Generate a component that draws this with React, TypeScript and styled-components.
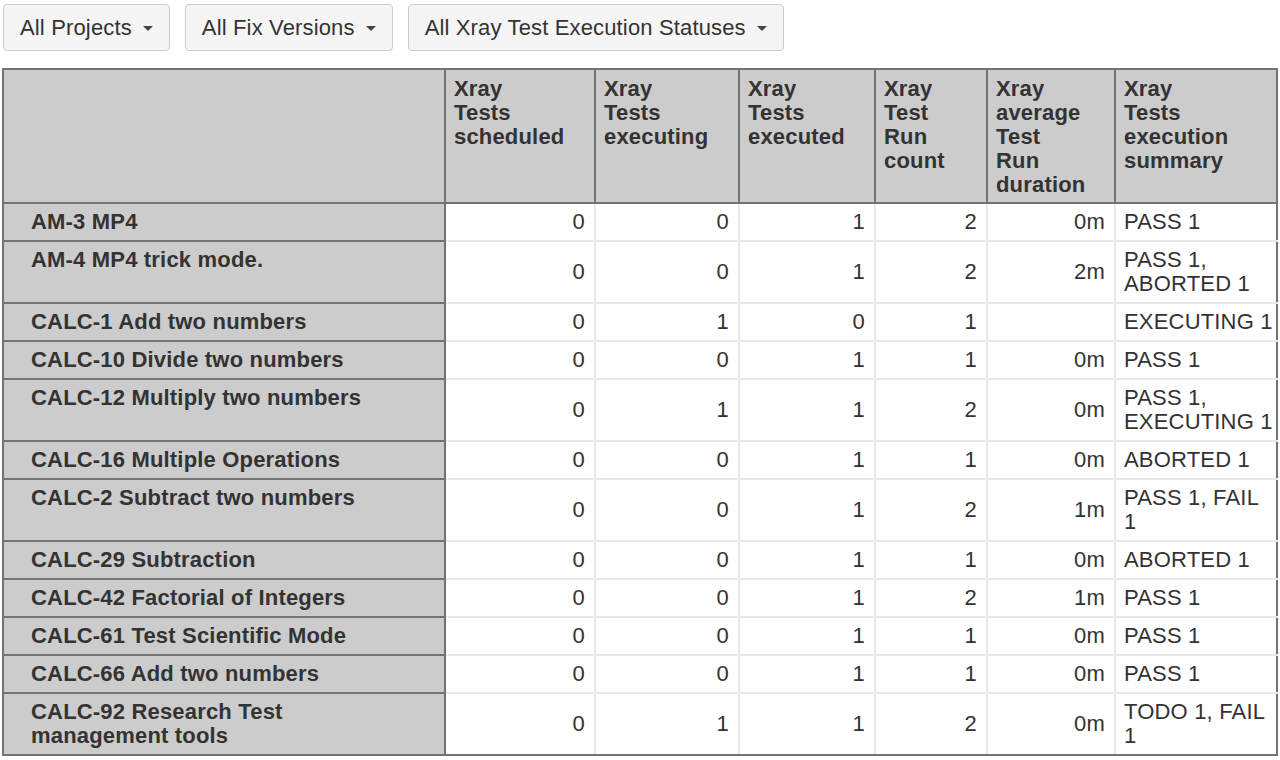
import React from "react";
import styled, { createGlobalStyle } from "styled-components";

const GlobalStyle = createGlobalStyle`
  html, body {
    margin: 0;
    padding: 0;
    background: #ffffff;
  }
  body {
    font-family: "Liberation Sans", Arial, Helvetica, sans-serif;
    color: #333333;
    letter-spacing: 0.18px;
  }
`;

const DARK = "#737373";
const LIGHT = "#e9e9e9";

const Page = styled.div`
  padding: 4px 0 0 2px;
`;

const Toolbar = styled.div`
  display: flex;
  gap: 15px;
  margin-left: 1px;
  margin-bottom: 17px;
`;

const FilterButton = styled.button`
  display: inline-flex;
  align-items: center;
  gap: 11px;
  height: 47px;
  padding: 0 16px 0 16px;
  border: 1px solid #cccccc;
  border-radius: 4px;
  background: #f5f5f5;
  color: #333333;
  font-family: "Liberation Sans", Arial, Helvetica, sans-serif;
  font-size: 22px;
  line-height: 24px;
  letter-spacing: 0.15px;
  cursor: pointer;
`;

const Caret = styled.span`
  display: inline-block;
  width: 0;
  height: 0;
  margin-top: 2px;
  border-top: 5px solid #444444;
  border-left: 5px solid transparent;
  border-right: 5px solid transparent;
`;

const Table = styled.table`
  width: 1276px;
  table-layout: fixed;
  border-collapse: collapse;
  border: 2px solid ${DARK};
  font-size: 22px;
  line-height: 24px;
  color: #333333;
`;

const HeadCell = styled.th`
  background: #cccccc;
  border: 2px solid ${DARK};
  padding: 7px 8px 5px;
  text-align: left;
  vertical-align: top;
  font-weight: bold;
`;

const HeadLabel = styled.div`
  width: min-content;
`;

const RowHead = styled.th`
  background: #cccccc;
  border: 2px solid ${DARK};
  padding: 6px 27px;
  text-align: left;
  vertical-align: top;
  font-weight: bold;
`;

const Cell = styled.td<{ $summary?: boolean; $last?: boolean; $bottom?: boolean }>`
  border: 2px solid ${LIGHT};
  border-right-color: ${(p) => (p.$last ? DARK : LIGHT)};
  border-bottom-color: ${(p) => (p.$bottom ? DARK : LIGHT)};
  padding: ${(p) => (p.$summary ? "6px 2px 6px 8px" : "6px 9px 6px 8px")};
  text-align: ${(p) => (p.$summary ? "left" : "right")};
  vertical-align: middle;
  background: #ffffff;
`;

const columns: { width: number; label?: string }[] = [
  { width: 442 },
  { width: 150, label: "Xray Tests scheduled" },
  { width: 144, label: "Xray Tests executing" },
  { width: 136, label: "Xray Tests executed" },
  { width: 112, label: "Xray Test Run count" },
  { width: 128, label: "Xray average Test Run duration" },
  { width: 162, label: "Xray Tests execution summary" },
];

type Row = [string, number, number, number, number, string, string];

const rows: Row[] = [
  ["AM-3 MP4", 0, 0, 1, 2, "0m", "PASS 1"],
  ["AM-4 MP4 trick mode.", 0, 0, 1, 2, "2m", "PASS 1, ABORTED 1"],
  ["CALC-1 Add two numbers", 0, 1, 0, 1, "", "EXECUTING 1"],
  ["CALC-10 Divide two numbers", 0, 0, 1, 1, "0m", "PASS 1"],
  ["CALC-12 Multiply two numbers", 0, 1, 1, 2, "0m", "PASS 1, EXECUTING 1"],
  ["CALC-16 Multiple Operations", 0, 0, 1, 1, "0m", "ABORTED 1"],
  ["CALC-2 Subtract two numbers", 0, 0, 1, 2, "1m", "PASS 1, FAIL 1"],
  ["CALC-29 Subtraction", 0, 0, 1, 1, "0m", "ABORTED 1"],
  ["CALC-42 Factorial of Integers", 0, 0, 1, 2, "1m", "PASS 1"],
  ["CALC-61 Test Scientific Mode", 0, 0, 1, 1, "0m", "PASS 1"],
  ["CALC-66 Add two numbers", 0, 0, 1, 1, "0m", "PASS 1"],
  ["CALC-92 Research Test management tools", 0, 1, 1, 2, "0m", "TODO 1, FAIL 1"],
];

const filters = ["All Projects", "All Fix Versions", "All Xray Test Execution Statuses"];

export default function App() {
  return (
    <Page>
      <GlobalStyle />
      <Toolbar>
        {filters.map((f) => (
          <FilterButton key={f} type="button">
            {f}
            <Caret />
          </FilterButton>
        ))}
      </Toolbar>
      <Table>
        <colgroup>
          {columns.map((c, i) => (
            <col key={i} style={{ width: c.width }} />
          ))}
        </colgroup>
        <thead>
          <tr>
            {columns.map((c, i) => (
              <HeadCell key={i}>{c.label ? <HeadLabel>{c.label}</HeadLabel> : null}</HeadCell>
            ))}
          </tr>
        </thead>
        <tbody>
          {rows.map((r, ri) => {
            const bottom = ri === rows.length - 1;
            return (
              <tr key={r[0]}>
                <RowHead>{r[0]}</RowHead>
                {r.slice(1).map((v, ci) => (
                  <Cell key={ci} $summary={ci === 5} $last={ci === 5} $bottom={bottom}>
                    {v}
                  </Cell>
                ))}
              </tr>
            );
          })}
        </tbody>
      </Table>
    </Page>
  );
}
